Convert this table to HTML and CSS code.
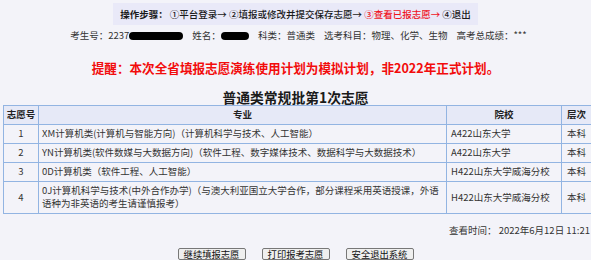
FILE: index.html
```html
<!DOCTYPE html>
<html lang="zh-CN">
<head>
<meta charset="utf-8">
<title>普通类常规批第1次志愿</title>
<link rel="stylesheet" href="styles.css">
</head>
<body>
<div class="page">
  <div class="steps-wrap">
    <div class="steps"><b>操作步骤：</b> ①平台登录→ ②填报或修改并提交保存志愿→ <span class="cur">③查看已报志愿→</span> ④退出</div>
  </div>
  <div class="info">
    <span>考生号：2237<span class="redact r1"></span></span>
    <span>姓名：<span class="redact r2"></span></span>
    <span>科类：普通类</span>
    <span>选考科目：物理、化学、生物</span>
    <span>高考总成绩：***</span>
  </div>
  <div class="warning">提醒：本次全省填报志愿演练使用计划为模拟计划，非2022年正式计划。</div>
  <div class="title">普通类常规批第1次志愿</div>
  <table class="plan">
    <colgroup>
      <col class="c-no"><col class="c-major"><col class="c-school"><col class="c-level">
    </colgroup>
    <thead>
      <tr><th>志愿号</th><th>专业</th><th>院校</th><th>层次</th></tr>
    </thead>
    <tbody>
      <tr><td class="ctr">1</td><td>XM计算机类(计算机与智能方向)（计算机科学与技术、人工智能）</td><td>A422山东大学</td><td class="ctr">本科</td></tr>
      <tr><td class="ctr">2</td><td>YN计算机类(软件数媒与大数据方向)（软件工程、数字媒体技术、数据科学与大数据技术）</td><td>A422山东大学</td><td class="ctr">本科</td></tr>
      <tr><td class="ctr">3</td><td>0D计算机类（软件工程、人工智能）</td><td>H422山东大学威海分校</td><td class="ctr">本科</td></tr>
      <tr><td class="ctr">4</td><td>0J计算机科学与技术(中外合作办学)（与澳大利亚国立大学合作，部分课程采用英语授课，外语<br>语种为非英语的考生请谨慎报考）</td><td>H422山东大学威海分校</td><td class="ctr">本科</td></tr>
    </tbody>
  </table>
  <div class="time">查看时间：&nbsp;2022年6月12日 11:21</div>
  <div class="buttons">
    <button class="btn">继续填报志愿</button>
    <button class="btn">打印报考志愿</button>
    <button class="btn">安全退出系统</button>
  </div>
</div>
</body>
</html>
```
FILE: styles.css
```css
html, body {
  margin: 0;
  padding: 0;
  background: #ffffff;
}
.page {
  width: 591px;
  height: 260px;
  background: #f3f3f9;
  font-family: "Noto Sans CJK SC", "Microsoft YaHei", sans-serif;
  font-size: 9.5px;
  color: #333;
  overflow: hidden;
}
.steps-wrap {
  display: flex;
  justify-content: center;
  padding-top: 3px;
}
.steps {
  background: #e9e9f8;
  height: 22px;
  line-height: 22px;
  padding: 0 7px;
  color: #1a1a1a;
  white-space: nowrap;
  font-weight: 500;
}
.steps b { font-weight: bold; }
.steps .cur { color: #f0141e; }
.info {
  margin-top: 3px;
  line-height: 14px;
  text-align: center;
  display: flex;
  justify-content: center;
  gap: 9px;
  padding-left: 6px;
}
.redact {
  display: inline-block;
  background: #000;
  height: 8px;
  border-radius: 5px;
  vertical-align: -1px;
}
.r1 { width: 54px; }
.r2 { width: 28px; }
.warning {
  margin-top: 17px;
  line-height: 18px;
  text-align: center;
  color: #f20c0c;
  font-weight: bold;
  font-size: 12.6px;
}
.title {
  margin-top: 12px;
  line-height: 16px;
  text-align: center;
  font-weight: bold;
  font-size: 13.8px;
  color: #1a1a1a;
}
.plan {
  margin: 0 0 0 3px;
  width: 588px;
  table-layout: fixed;
  border-collapse: collapse;
  border: 1px solid #92b4e2;
}
.c-no { width: 35px; }
.c-major { width: 408px; }
.c-school { width: 115px; }
.c-level { width: 30px; }
.plan th, .plan td {
  border: 1px solid #92b4e2;
  padding: 2px 3px 3px;
  line-height: 13px;
  font-size: 9.5px;
  text-align: left;
  white-space: nowrap;
}
.plan th {
  background: #e6e9f7;
  font-weight: bold;
  color: #222;
  text-align: center;
  padding: 2px 1px 3px;
}
.plan td { color: #333; }
.plan td:nth-child(3) { padding-left: 4px; }
.plan td.ctr { text-align: center; padding: 2px 1px 3px; }
.time {
  margin-top: 9px;
  line-height: 14px;
  text-align: right;
  padding-right: 1px;
  color: #333;
}
.buttons {
  margin-top: 11px;
  display: flex;
  justify-content: center;
  gap: 16px;
}
.btn {
  font-family: "Noto Sans CJK SC", "Microsoft YaHei", sans-serif;
  font-size: 9.3px;
  height: 12px;
  line-height: 10px;
  width: 68px;
  padding: 0;
  margin: 0;
  border: 1px solid #777;
  border-radius: 2px;
  background: #efefef;
  color: #111;
}
```
